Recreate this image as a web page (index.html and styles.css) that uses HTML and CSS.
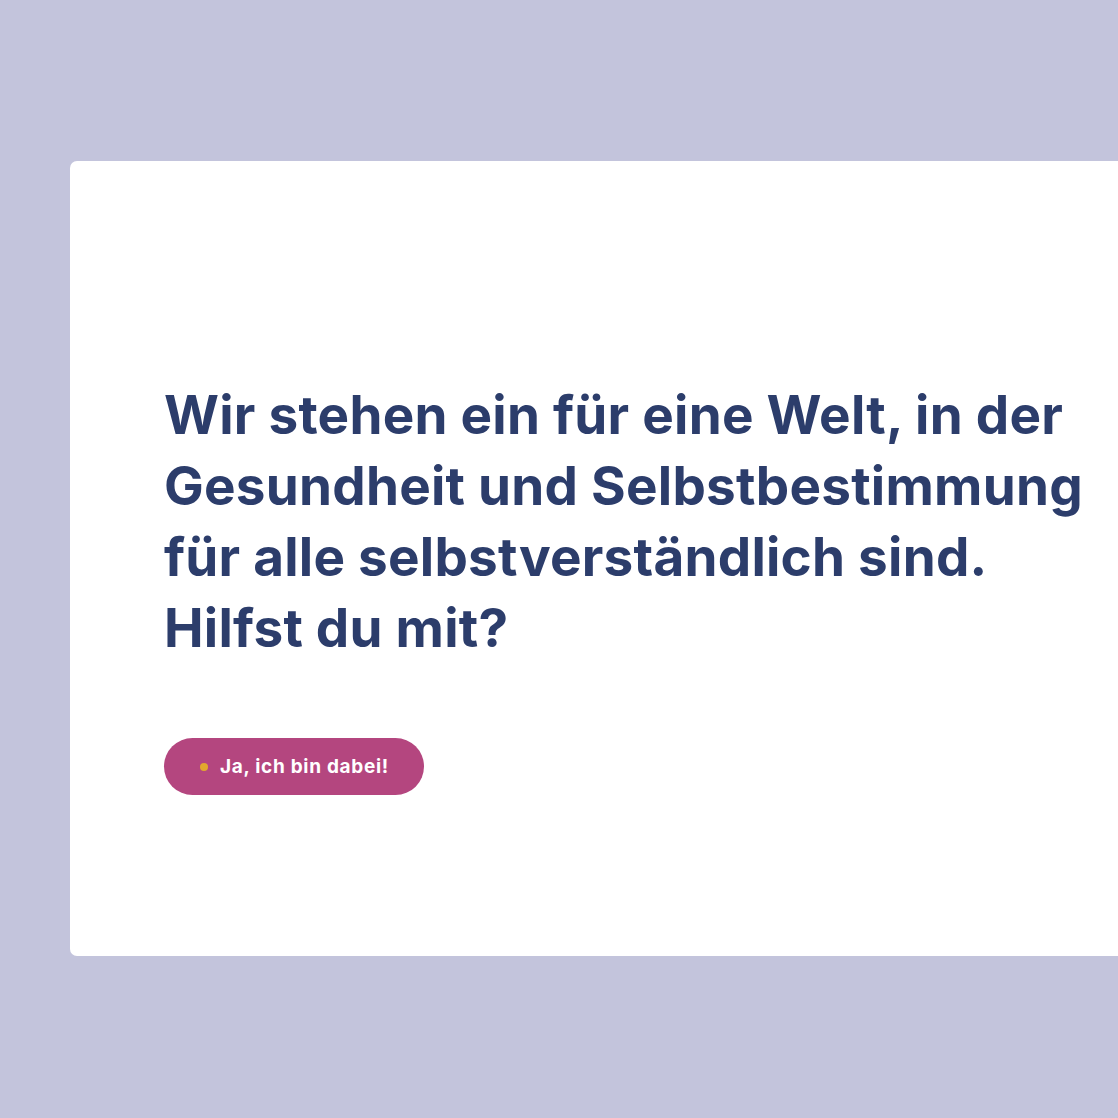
FILE: index.html
```html
<!DOCTYPE html>
<html lang="de">
<head>
<meta charset="utf-8">
<link rel="stylesheet" href="styles.css">
</head>
<body>
<main class="page">
  <section class="card">
    <h1 class="headline">Wir stehen ein für eine Welt, in der<br>Gesundheit und Selbstbestimmung<br>für alle selbstverständlich sind.<br>Hilfst du mit?</h1>
    <a class="cta" href="#"><span class="dot"></span>Ja, ich bin dabei!</a>
  </section>
</main>
</body>
</html>
```

FILE: styles.css
```css
html, body {
  margin: 0;
  padding: 0;
  background: #c3c4dc;
  overflow: hidden;
}
.page {
  width: 1118px;
  height: 1118px;
  padding: 161px 0 0 70px;
  box-sizing: border-box;
}
.card {
  background: #ffffff;
  border-radius: 7px 0 0 7px;
  height: 795px;
  box-sizing: border-box;
  padding: 219px 0 0 94px;
}
.headline {
  margin: 0;
  font-family: Inter, "Liberation Sans", sans-serif;
  font-weight: 700;
  font-size: 53px;
  line-height: 71px;
  color: #2c3d6b;
  letter-spacing: 0.25px;
  white-space: nowrap;
}
.cta {
  display: inline-flex;
  align-items: center;
  margin-top: 74px;
  height: 57px;
  width: 260px;
  box-sizing: border-box;
  padding-left: 36px;
  border-radius: 29px;
  background: #b4467f;
  color: #ffffff;
  text-decoration: none;
  font-family: Inter, "Liberation Sans", sans-serif;
  font-weight: 700;
  font-size: 19px;
  letter-spacing: 0.7px;
}
.dot {
  width: 8px;
  height: 8px;
  border-radius: 50%;
  background: #e2a82e;
  margin-right: 12px;
}
```
